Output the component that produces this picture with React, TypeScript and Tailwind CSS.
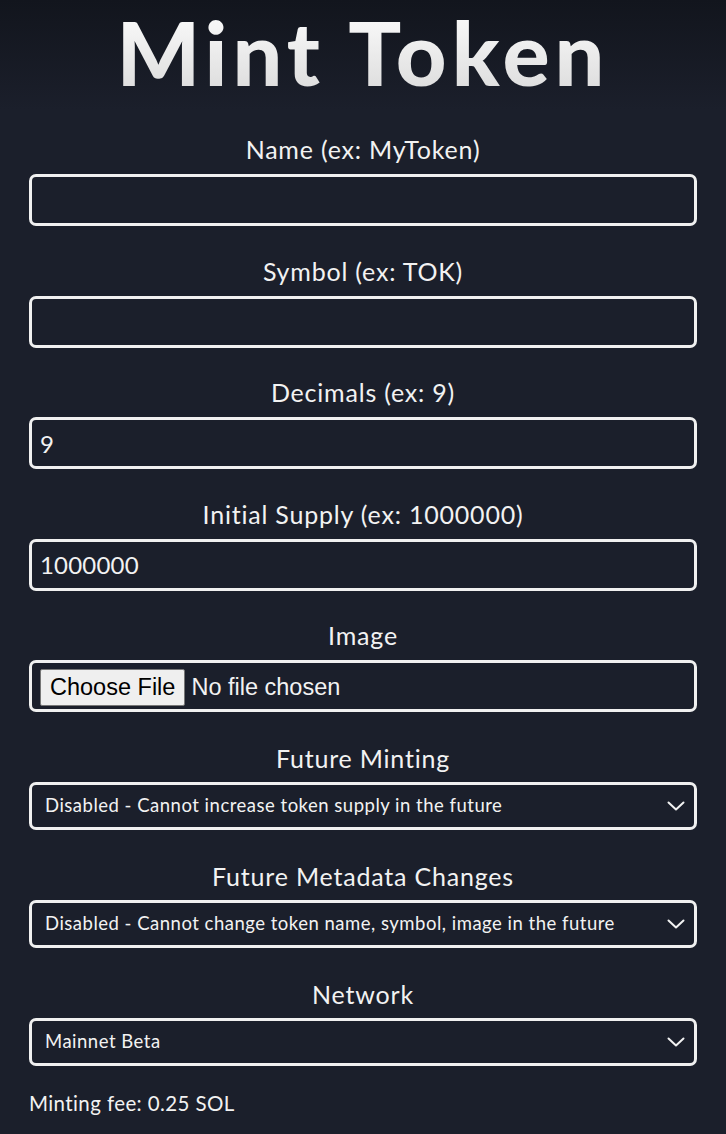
import React, { useState } from 'react';

const font = { fontFamily: 'Lato, "Noto Sans", sans-serif' };

function Chevron() {
  return (
    <svg
      className="pointer-events-none absolute right-[12px] top-1/2 -translate-y-1/2"
      width="18"
      height="10"
      viewBox="0 0 18 10"
      fill="none"
      stroke="#f2f2f2"
      strokeWidth="2"
      strokeLinecap="round"
      strokeLinejoin="round"
    >
      <path d="M1.5 1.5 L9 8.5 L16.5 1.5" />
    </svg>
  );
}

function Field({ label, children }: { label: string; children: React.ReactNode }) {
  return (
    <div className="flex flex-col items-center">
      <label className="text-[25px] leading-[30px] tracking-[0.8px] text-[#f2f2f2] mb-[10px]">{label}</label>
      {children}
    </div>
  );
}

function SelectField({ label, value, options }: { label: string; value: string; options: string[] }) {
  const [v, setV] = useState(value);
  return (
    <div className="flex flex-col items-center">
      <label className="text-[25px] leading-[30px] tracking-[0.8px] text-[#f2f2f2] mb-[9px]">{label}</label>
      <div className="relative w-full">
        <select
          value={v}
          onChange={(e) => setV(e.target.value)}
          className="block w-full h-[48px] appearance-none bg-transparent border-[3px] border-[#f0f0f0] rounded-[7px] pl-[13px] pr-10 text-[18.5px] tracking-[0.5px] text-[#f2f2f2] outline-none"
          style={font}
        >
          {options.map((o) => (
            <option key={o} value={o} className="bg-[#1b1f2b]">
              {o}
            </option>
          ))}
        </select>
        <Chevron />
      </div>
    </div>
  );
}

export default function App() {
  const [name, setName] = useState('');
  const [symbol, setSymbol] = useState('');
  const [decimals, setDecimals] = useState('9');
  const [supply, setSupply] = useState('1000000');

  const inputCls =
    'block w-full h-[52px] bg-transparent border-[3px] border-[#f0f0f0] rounded-[7px] px-[8px] text-[24px] tracking-[0.2px] text-[#f2f2f2] outline-none';

  return (
    <div
      className="min-h-screen w-full bg-[#1b1f2b] bg-[linear-gradient(to_bottom,#12151d_0px,#1b1f2b_110px)]"
      style={font}
    >
      <div className="px-[29px] pb-[40px]">
        <h1 className="text-center text-[88px] leading-[100px] font-black tracking-[5px] bg-clip-text text-transparent bg-[linear-gradient(to_bottom,#ffffff,#d9d9d9)] pt-[2px]">
          Mint Token
        </h1>

        <div className="flex flex-col gap-[29.5px] mt-[32px]">
          <Field label="Name (ex: MyToken)">
            <input className={inputCls} style={font} value={name} onChange={(e) => setName(e.target.value)} />
          </Field>
          <Field label="Symbol (ex: TOK)">
            <input className={inputCls} style={font} value={symbol} onChange={(e) => setSymbol(e.target.value)} />
          </Field>
          <Field label="Decimals (ex: 9)">
            <input className={inputCls} style={font} value={decimals} onChange={(e) => setDecimals(e.target.value)} />
          </Field>
          <Field label="Initial Supply (ex: 1000000)">
            <input className={inputCls} style={font} value={supply} onChange={(e) => setSupply(e.target.value)} />
          </Field>
          <Field label="Image">
            <input
              type="file"
              className="block w-full h-[52px] border-[3px] border-[#f0f0f0] rounded-[7px] px-[8px] py-[6px] text-[23.5px] text-[#f2f2f2] file:mr-[6px] file:px-[9px] file:py-0 file:bg-[#efefef] file:text-black file:border file:border-[#767676] file:rounded-[2px]"
              style={{ fontFamily: '"Liberation Sans", Arial, sans-serif' }}
            />
          </Field>
        </div>

        <div className="flex flex-col gap-[31px] mt-[31px]">
          <SelectField
            label="Future Minting"
            value="disabled"
            options={['Disabled - Cannot increase token supply in the future']}
          />
          <SelectField
            label="Future Metadata Changes"
            value="disabled"
            options={['Disabled - Cannot change token name, symbol, image in the future']}
          />
          <SelectField label="Network" value="mainnet" options={['Mainnet Beta']} />
        </div>

        <p className="mt-[22px] text-[20.5px] leading-[30px] tracking-[0.4px] text-[#f2f2f2]">Minting fee: 0.25 SOL</p>
      </div>
    </div>
  );
}
